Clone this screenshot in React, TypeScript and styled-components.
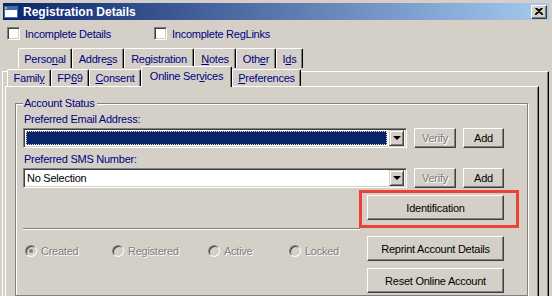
import React from "react";
import styled, { createGlobalStyle } from "styled-components";

const GlobalStyle = createGlobalStyle`
  html, body {
    margin: 0;
    padding: 0;
    background: #d4d0c8;
  }
  body {
    font-family: "Liberation Sans", Arial, sans-serif;
    font-size: 11px;
    letter-spacing: -0.25px;
  }
  #root {
    width: 552px;
    height: 296px;
    overflow: hidden;
  }
`;

const NAVY = "#000080";

const Window = styled.div`
  width: 552px;
  height: 296px;
  background: #d4d0c8;
  overflow: hidden;
  display: flex;
  flex-direction: column;
`;

const TitleBar = styled.div`
  flex: none;
  margin: 3px 3px 0 3px;
  height: 17px;
  padding: 0 2px 0 1px;
  display: flex;
  align-items: center;
  gap: 5px;
  background: linear-gradient(to right, #0a246a, #a6caf0);
  color: #fff;
  font-weight: bold;
  font-size: 12px;
  letter-spacing: 0;
`;

const TitleText = styled.span`
  flex: 1;
  white-space: nowrap;
`;

const CloseButton = styled.div`
  box-sizing: border-box;
  width: 16px;
  height: 14px;
  background: #d4d0c8;
  border: 1px solid;
  border-color: #fff #404040 #404040 #fff;
  box-shadow: inset -1px -1px 0 #808080;
  display: flex;
  align-items: center;
  justify-content: center;
`;

const CheckRow = styled.div`
  flex: none;
  margin-top: 7px;
  height: 13px;
  padding-left: 7px;
  display: flex;
  gap: 43px;
`;

const CheckItem = styled.label`
  display: flex;
  align-items: center;
  gap: 5px;
  color: ${NAVY};
  white-space: nowrap;
`;

const CheckBox = styled.span`
  box-sizing: border-box;
  width: 13px;
  height: 13px;
  background: #fff;
  border: 1px solid;
  border-color: #808080 #fff #fff #808080;
  box-shadow: inset 1px 1px 0 #404040, inset -1px -1px 0 #d4d0c8;
`;

const TabRow = styled.div<{ $pad: number }>`
  flex: none;
  display: flex;
  align-items: flex-end;
  padding-left: ${(p) => p.$pad}px;
`;

const BackRow = styled(TabRow)`
  margin-top: 8px;
  height: 20px;
`;

const FrontRow = styled(TabRow)`
  margin-top: -3px;
  height: 17px;
`;

const Tab = styled.div<{ $w: number; $h: number; $active?: boolean }>`
  box-sizing: border-box;
  width: ${(p) => p.$w}px;
  height: ${(p) => (p.$active ? 21 : p.$h)}px;
  margin-bottom: ${(p) => (p.$active ? -1 : 0)}px;
  position: ${(p) => (p.$active ? "relative" : "static")};
  z-index: ${(p) => (p.$active ? 2 : "auto")};
  background: #d4d0c8;
  border-top: 1px solid #fff;
  border-left: 1px solid #fff;
  border-right: 1px solid #000;
  border-radius: 2px 2px 0 0;
  box-shadow: inset -1px 0 0 #808080;
  display: flex;
  align-items: center;
  justify-content: center;
  color: ${NAVY};
  white-space: nowrap;
  padding-bottom: ${(p) => (p.$active ? 2 : 0)}px;
`;

const OuterFrame = styled.div`
  flex: 1;
  margin: 3px 3px 0 2px;
  border-top: 1px solid #fff;
  border-left: 1px solid #fff;
  border-right: 1px solid #000;
  box-shadow: inset -1px 0 0 #808080;
  display: flex;
  flex-direction: column;
`;

const Panel = styled.div`
  flex: 1;
  margin: 0 9px 0 2px;
  border-top: 1px solid #fff;
  border-left: 1px solid #fff;
  border-right: 1px solid #000;
  box-shadow: inset -1px 0 0 #808080;
  display: flex;
  flex-direction: column;
`;

const GroupBox = styled.fieldset`
  flex: 1;
  margin: 10px 10px 0 9px;
  padding: 0 23px 0 7px;
  border: 1px solid #808080;
  box-shadow: inset 1px 1px 0 #fff, 1px 1px 0 #fff;
  display: flex;
  flex-direction: column;
  min-width: 0;
`;

const Legend = styled.legend`
  padding: 0 2px 0 1px;
  margin-left: 0;
  line-height: 13px;
  color: ${NAVY};
  background: #d4d0c8;
`;

const FieldLabel = styled.div<{ $top: number }>`
  margin-top: ${(p) => p.$top}px;
  padding-left: 1px;
  line-height: 13px;
  color: ${NAVY};
`;

const ComboRow = styled.div`
  margin-top: 2px;
  display: flex;
  align-items: center;
  gap: 7px;
`;

const Combo = styled.div`
  box-sizing: border-box;
  width: 384px;
  height: 20px;
  background: #fff;
  border: 1px solid;
  border-color: #808080 #fff #fff #808080;
  box-shadow: inset 1px 1px 0 #404040, inset -1px -1px 0 #d4d0c8;
  padding: 1px 2px 1px 1px;
  display: flex;
  align-items: stretch;
`;

const ComboValue = styled.div<{ $selected?: boolean }>`
  flex: 1;
  margin: 1px 2px 1px 1px;
  padding-left: 1px;
  display: flex;
  align-items: center;
  color: #000;
  background: ${(p) => (p.$selected ? "#0a246a" : "transparent")};
  outline: ${(p) => (p.$selected ? "1px dotted #e8e4b0" : "none")};
  outline-offset: -1px;
`;

const DropButton = styled.div`
  box-sizing: border-box;
  width: 15px;
  background: #d4d0c8;
  border: 1px solid;
  border-color: #d4d0c8 #404040 #404040 #d4d0c8;
  box-shadow: inset 1px 1px 0 #fff, inset -1px -1px 0 #808080;
  display: flex;
  align-items: center;
  justify-content: center;
`;

const Arrow = styled.span`
  width: 0;
  height: 0;
  border-left: 4px solid transparent;
  border-right: 4px solid transparent;
  border-top: 4px solid #000;
`;

const PushButton = styled.div<{ $w: number; $h: number; $disabled?: boolean }>`
  box-sizing: border-box;
  flex: none;
  width: ${(p) => p.$w}px;
  height: ${(p) => p.$h}px;
  background: #d4d0c8;
  border: 1px solid;
  border-color: #fff #404040 #404040 #fff;
  box-shadow: inset -1px -1px 0 #808080;
  display: flex;
  align-items: center;
  justify-content: center;
  white-space: nowrap;
  color: ${(p) => (p.$disabled ? "#808080" : "#000")};
  text-shadow: ${(p) => (p.$disabled ? "1px 1px 0 #fff" : "none")};
`;

const IdRow = styled.div`
  margin-top: 7px;
  display: flex;
  justify-content: flex-end;
`;

const Highlight = styled.div`
  position: relative;
`;

const RedBox = styled.div`
  position: absolute;
  top: -5px;
  left: -8px;
  right: -15px;
  bottom: -8px;
  border: 3px solid #ee4136;
  pointer-events: none;
`;

const Separator = styled.div`
  margin-top: 8px;
  width: 337px;
  height: 1px;
  background: #808080;
  border-bottom: 1px solid #fff;
`;

const BottomRow = styled.div`
  margin-top: 6px;
  display: flex;
  justify-content: space-between;
  align-items: flex-start;
`;

const RadioGroup = styled.div`
  margin-top: 8px;
  padding-left: 2px;
  display: grid;
  grid-template-columns: 87px 96px 81px auto;
`;

const RadioItem = styled.div`
  display: flex;
  align-items: center;
  gap: 4px;
  color: #808080;
  text-shadow: 1px 1px 0 #fff;
  white-space: nowrap;
  line-height: 14px;
`;

const RadioDot = styled.span<{ $checked?: boolean }>`
  box-sizing: border-box;
  flex: none;
  width: 12px;
  height: 12px;
  border-radius: 50%;
  background: #d4d0c8;
  border: 1px solid;
  border-color: #808080 #fff #fff #808080;
  box-shadow: inset 1px 1px 0 #404040;
  display: flex;
  align-items: center;
  justify-content: center;
  &::after {
    content: "";
    width: 4px;
    height: 4px;
    border-radius: 50%;
    background: ${(p) => (p.$checked ? "#808080" : "transparent")};
  }
`;

const ButtonColumn = styled.div`
  display: flex;
  flex-direction: column;
  gap: 7px;
`;

function AppIcon() {
  return (
    <svg width="14" height="12" viewBox="0 0 14 12">
      <rect x="0.5" y="0.5" width="13" height="11" fill="#fff" stroke="#3a6ea5" />
      <rect x="1" y="1" width="12" height="3" fill="#3a6ea5" />
      <rect x="1" y="1" width="2" height="2" fill="#f0a030" />
    </svg>
  );
}

function CloseGlyph() {
  return (
    <svg width="8" height="7" viewBox="0 0 8 7">
      <path d="M0.5 0 L7.5 7 M1.5 0 L8 6.5 M7.5 0 L0.5 7 M6.5 0 L0 6.5" stroke="#000" strokeWidth="1.2" />
    </svg>
  );
}

type TabDef = { label: React.ReactNode; w: number; active?: boolean };

const backTabs: TabDef[] = [
  { label: <>Perso<u>n</u>al</>, w: 54 },
  { label: <>Addre<u>s</u>s</>, w: 52 },
  { label: "Registration", w: 70 },
  { label: <><u>N</u>otes</>, w: 42 },
  { label: <>Oth<u>e</u>r</>, w: 40 },
  { label: <>I<u>d</u>s</>, w: 27 },
];

const frontTabs: TabDef[] = [
  { label: <>Famil<u>y</u></>, w: 44 },
  { label: <>FP<u>6</u>9</>, w: 38 },
  { label: <><u>C</u>onsent</>, w: 52 },
  { label: <>Online Ser<u>v</u>ices</>, w: 91, active: true },
  { label: <><u>P</u>references</>, w: 69 },
];

const statuses = [
  { label: "Created", checked: true },
  { label: "Registered" },
  { label: "Active" },
  { label: "Locked" },
];

function ComboLine({ value, selected }: { value?: string; selected?: boolean }) {
  return (
    <ComboRow>
      <Combo>
        <ComboValue $selected={selected}>{value}</ComboValue>
        <DropButton>
          <Arrow />
        </DropButton>
      </Combo>
      <PushButton $w={42} $h={20} $disabled>
        Verify
      </PushButton>
      <PushButton $w={41} $h={20}>
        Add
      </PushButton>
    </ComboRow>
  );
}

export default function App() {
  return (
    <>
      <GlobalStyle />
      <Window>
        <TitleBar>
          <AppIcon />
          <TitleText>Registration Details</TitleText>
          <CloseButton>
            <CloseGlyph />
          </CloseButton>
        </TitleBar>

        <CheckRow>
          <CheckItem>
            <CheckBox />
            Incomplete Details
          </CheckItem>
          <CheckItem>
            <CheckBox />
            Incomplete RegLinks
          </CheckItem>
        </CheckRow>

        <BackRow $pad={18}>
          {backTabs.map((t, i) => (
            <Tab key={i} $w={t.w} $h={20}>
              {t.label}
            </Tab>
          ))}
        </BackRow>

        <OuterFrame>
          <FrontRow $pad={4}>
            {frontTabs.map((t, i) => (
              <Tab key={i} $w={t.w} $h={17} $active={t.active}>
                {t.label}
              </Tab>
            ))}
          </FrontRow>

          <Panel>
            <GroupBox>
              <Legend>Account Status</Legend>

              <FieldLabel $top={3}>Preferred Email Address:</FieldLabel>
              <ComboLine selected />

              <FieldLabel $top={5}>Preferred SMS Number:</FieldLabel>
              <ComboLine value="No Selection" />

              <IdRow>
                <Highlight>
                  <PushButton $w={137} $h={25}>
                    Identification
                  </PushButton>
                  <RedBox />
                </Highlight>
              </IdRow>

              <Separator />

              <BottomRow>
                <RadioGroup>
                  {statuses.map((s) => (
                    <RadioItem key={s.label}>
                      <RadioDot $checked={s.checked} />
                      {s.label}
                    </RadioItem>
                  ))}
                </RadioGroup>
                <ButtonColumn>
                  <PushButton $w={137} $h={25}>
                    Reprint Account Details
                  </PushButton>
                  <PushButton $w={137} $h={25}>
                    Reset Online Account
                  </PushButton>
                </ButtonColumn>
              </BottomRow>
            </GroupBox>
          </Panel>
        </OuterFrame>
      </Window>
    </>
  );
}
